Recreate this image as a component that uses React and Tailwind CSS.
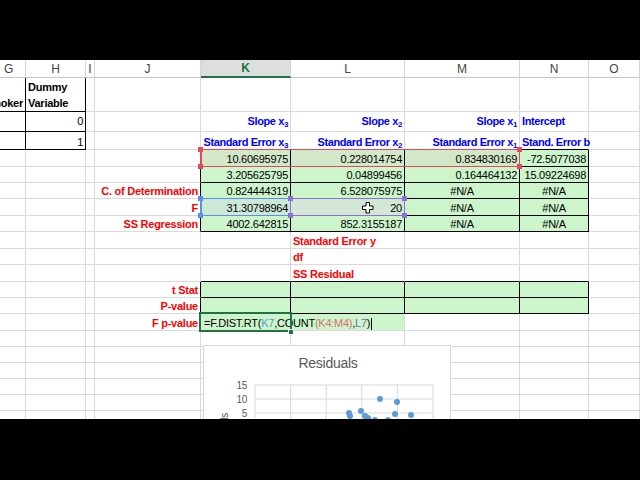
import React from "react";

const COLS = "grid grid-cols-[26px_60px_9px_106px_90px_114px_115px_69px_51px]";
const red = "font-bold text-[#ff0000]";
const blue = "font-bold text-[#0000ff] tracking-[-0.4px]";
const bold = "font-bold text-black";
const GREEN = "bg-[#ccf5cc]";

function Cell({ children, r, b, align = "right", cls = "" }) {
  const rc = r ? "border-r-black" : "border-r-[#dadada]";
  const bc = b ? "border-b-black" : "border-b-[#dadada]";
  const al =
    align === "right" ? "justify-end" : align === "center" ? "justify-center" : "justify-start";
  return (
    <div className={`flex items-end min-w-0 whitespace-nowrap border-r border-b px-[2px] ${rc} ${bc} ${al} ${cls}`}>
      {children}
    </div>
  );
}

function Row({ h, children }) {
  return <div className={`${COLS} leading-[13px] ${h}`}>{children}</div>;
}

function Blanks({ n }) {
  return Array.from({ length: n }).map((_, i) => <Cell key={i} />);
}

function Sub({ children }) {
  return <sub className="text-[8px]">{children}</sub>;
}

function Header() {
  const h = "flex items-center justify-center h-[18px] border-r border-b border-r-[#d4d4d4] border-b-[#c6c6c6]";
  return (
    <div className={`${COLS} text-[12px] text-[#444444] tracking-normal`}>
      <div className="flex items-center justify-start pl-[4px] h-[18px] border-r border-b border-r-[#d4d4d4] border-b-[#c6c6c6]">G</div>
      <div className={h}>H</div>
      <div className={h}>I</div>
      <div className={h}>J</div>
      <div className="flex items-center justify-center h-[18px] border-r border-r-[#d4d4d4] bg-[#dedede] border-b-2 border-b-[#217346] text-[#217346] font-bold">K</div>
      <div className={h}>L</div>
      <div className={h}>M</div>
      <div className={h}>N</div>
      <div className={h}>O</div>
    </div>
  );
}

function Chart() {
  const xs = [51, 86.6, 122.2, 157.8, 193.4, 229];
  const pts = [
    [145, 67], [146, 70], [157, 65], [161, 70], [164, 72], [171, 74],
    [176, 53], [184, 74], [191, 68], [193, 56], [207, 69], [168, 80], [180, 82],
  ];
  return (
    <div className="absolute left-[203px] top-[285px] w-[248px] h-[140px] bg-white border border-[#d9d9d9]">
      <svg width="248" height="140" className="block" fontFamily="Liberation Sans, Arial, sans-serif">
        <text x="124" y="22" fontSize="14" fill="#595959" textAnchor="middle">Residuals</text>
        {[39, 53, 67, 81, 95, 109].map((y) => (
          <line key={y} x1="51" x2="229" y1={y} y2={y} stroke="#d9d9d9" strokeWidth="1" />
        ))}
        {xs.map((x) => (
          <line key={x} x1={x} x2={x} y1="39" y2="140" stroke="#d9d9d9" strokeWidth="1" />
        ))}
        <text x="43" y="43" fontSize="10" fill="#595959" textAnchor="end">15</text>
        <text x="43" y="57" fontSize="10" fill="#595959" textAnchor="end">10</text>
        <text x="43" y="71" fontSize="10" fill="#595959" textAnchor="end">5</text>
        <text x="43" y="85" fontSize="10" fill="#595959" textAnchor="end">0</text>
        <text x="24" y="67" fontSize="10" fill="#595959" textAnchor="end" transform="rotate(-90 24 67)">Residuals</text>
        {pts.map(([x, y], i) => (
          <circle key={i} cx={x} cy={y} r="3" fill="#5b9bd5" />
        ))}
      </svg>
    </div>
  );
}

export default function App() {
  return (
    <div className="w-[640px] h-[480px] bg-black overflow-hidden font-['Liberation_Sans',Arial,sans-serif] text-[11px] tracking-[-0.25px] text-black">
      <div className="h-[60px]" />
      <div className="relative h-[359px] bg-white overflow-hidden">
        <Header />

        {/* Row: Dummy Variable */}
        <div className={`${COLS} h-[34px] leading-[16px]`}>
          <Cell r b cls={bold}>Smoker</Cell>
          <Cell r b align="left" cls={`${bold} whitespace-normal`}>
            <span>Dummy<br />Variable</span>
          </Cell>
          <Blanks n={7} />
        </div>

        {/* Row: Slope */}
        <div className={`${COLS} h-[20px] leading-[13px]`}>
          <Cell r b cls="pb-[3px]" />
          <Cell r b cls="pb-[3px]">0</Cell>
          <Cell cls="pb-[3px]" />
          <Cell cls="pb-[3px]" />
          <Cell cls={`${blue} pb-[3px]`}><span>Slope x<Sub>3</Sub></span></Cell>
          <Cell cls={`${blue} pb-[3px]`}><span>Slope x<Sub>2</Sub></span></Cell>
          <Cell cls={`${blue} pb-[3px]`}><span>Slope x<Sub>1</Sub></span></Cell>
          <Cell align="left" cls={`${blue} pb-[3px]`}>Intercept</Cell>
          <Cell cls="pb-[3px]" />
        </div>

        {/* Row: Standard Error */}
        <Row h="h-[18px]">
          <Cell r b />
          <Cell r b>1</Cell>
          <Cell />
          <Cell />
          <Cell b cls={blue}><span>Standard Error x<Sub>3</Sub></span></Cell>
          <Cell b cls={blue}><span>Standard Error x<Sub>2</Sub></span></Cell>
          <Cell b cls={blue}><span>Standard Error x<Sub>1</Sub></span></Cell>
          <Cell b align="left" cls={blue}>Stand. Error b</Cell>
          <Cell />
        </Row>

        <Row h="h-[17px]">
          <Blanks n={3} />
          <Cell r />
          <Cell r b cls="bg-[#d2e8c8]">10.60695975</Cell>
          <Cell r b cls="bg-[#d2e8c8]">0.228014754</Cell>
          <Cell r b cls="bg-[#d2e8c8]">0.834830169</Cell>
          <Cell r b cls={GREEN}>-72.5077038</Cell>
          <Cell />
        </Row>

        <Row h="h-[16px]">
          <Blanks n={3} />
          <Cell r />
          <Cell r b cls={GREEN}>3.205625795</Cell>
          <Cell r b cls={GREEN}>0.04899456</Cell>
          <Cell r b cls={GREEN}>0.164464132</Cell>
          <Cell r b cls={GREEN}>15.09224698</Cell>
          <Cell />
        </Row>

        <Row h="h-[16px]">
          <Blanks n={3} />
          <Cell r cls={red}>C. of Determination</Cell>
          <Cell r b cls={GREEN}>0.824444319</Cell>
          <Cell r b cls={GREEN}>6.528075975</Cell>
          <Cell r b align="center" cls={GREEN}>#N/A</Cell>
          <Cell r b align="center" cls={GREEN}>#N/A</Cell>
          <Cell />
        </Row>

        <Row h="h-[17px]">
          <Blanks n={3} />
          <Cell r cls={red}>F</Cell>
          <Cell r b cls="bg-[#cce8d6]">31.30798964</Cell>
          <Cell r b cls="bg-[#d4e6d4]">20</Cell>
          <Cell r b align="center" cls={GREEN}>#N/A</Cell>
          <Cell r b align="center" cls={GREEN}>#N/A</Cell>
          <Cell />
        </Row>

        <Row h="h-[16px]">
          <Blanks n={3} />
          <Cell r cls={red}>SS Regression</Cell>
          <Cell r b cls={GREEN}>4002.642815</Cell>
          <Cell r b cls={GREEN}>852.3155187</Cell>
          <Cell r b align="center" cls={GREEN}>#N/A</Cell>
          <Cell r b align="center" cls={GREEN}>#N/A</Cell>
          <Cell />
        </Row>

        <Row h="h-[17px]">
          <Blanks n={5} />
          <Cell align="left" cls={red}>Standard Error y</Cell>
          <Blanks n={3} />
        </Row>

        <Row h="h-[16px]">
          <Blanks n={5} />
          <Cell align="left" cls={red}>df</Cell>
          <Blanks n={3} />
        </Row>

        <Row h="h-[17px]">
          <Blanks n={4} />
          <Cell b />
          <Cell b align="left" cls={red}>SS Residual</Cell>
          <Cell b />
          <Cell b />
          <Cell />
        </Row>

        <Row h="h-[16px]">
          <Blanks n={3} />
          <Cell r cls={red}>t Stat</Cell>
          <Cell r b cls={GREEN} />
          <Cell r b cls={GREEN} />
          <Cell r b cls={GREEN} />
          <Cell r b cls={GREEN} />
          <Cell />
        </Row>

        <Row h="h-[16px]">
          <Blanks n={3} />
          <Cell r cls={red}>P-value</Cell>
          <Cell r b cls={GREEN} />
          <Cell r b cls={GREEN} />
          <Cell r b cls={GREEN} />
          <Cell r b cls={GREEN} />
          <Cell />
        </Row>

        <Row h="h-[17px]">
          <Blanks n={3} />
          <Cell r cls={red}>F p-value</Cell>
          <Cell align="left" cls={`${GREEN} col-span-2 pl-[3px]`}>
            <span>
              =F.DIST.RT(<span className="text-[#5b9bd5]">K7</span>,COUNT
              <span className="text-[#e06c6c]">(K4:M4)</span>,
              <span className="text-[#8064c8]">L7</span>)
              <span className="inline-block w-px h-[12px] bg-black align-bottom ml-px" />
            </span>
          </Cell>
          <Blanks n={3} />
        </Row>

        {["a", "b", "c", "d", "e", "f"].map((k) => (
          <Row key={k} h="h-[16px]">
            <Blanks n={9} />
          </Row>
        ))}

        {/* reference highlights (overlays) */}
        <div className="absolute left-[200px] top-[89px] w-[320px] h-[18px] border border-[#e04a5a] border-l-2 pointer-events-none" />
        <div className="absolute left-[198px] top-[87px] w-[5px] h-[5px] bg-[#e04a5a]" />
        <div className="absolute left-[517px] top-[87px] w-[5px] h-[5px] bg-[#e04a5a]" />
        <div className="absolute left-[198px] top-[104px] w-[5px] h-[5px] bg-[#e04a5a]" />
        <div className="absolute left-[517px] top-[104px] w-[5px] h-[5px] bg-[#e04a5a]" />

        <div className="absolute left-[200px] top-[138px] w-[91px] h-[18px] border border-[#5b8fe0] border-l-2 pointer-events-none" />
        <div className="absolute left-[290px] top-[138px] w-[115px] h-[18px] border border-[#8f6fd8] pointer-events-none" />
        <div className="absolute left-[198px] top-[136px] w-[5px] h-[5px] bg-[#5b8fe0]" />
        <div className="absolute left-[198px] top-[153px] w-[5px] h-[5px] bg-[#5b8fe0]" />
        <div className="absolute left-[288px] top-[136px] w-[5px] h-[5px] bg-[#8f6fd8]" />
        <div className="absolute left-[288px] top-[153px] w-[5px] h-[5px] bg-[#8f6fd8]" />
        <div className="absolute left-[402px] top-[136px] w-[5px] h-[5px] bg-[#8f6fd8]" />
        <div className="absolute left-[402px] top-[153px] w-[5px] h-[5px] bg-[#8f6fd8]" />

        {/* mouse cursor */}
        <svg className="absolute left-[362px] top-[142px]" width="12" height="12" viewBox="0 0 12 12">
          <polygon
            points="4,0.5 7.5,0.5 7.5,4 11,4 11,7.5 7.5,7.5 7.5,11 4,11 4,7.5 0.5,7.5 0.5,4 4,4"
            fill="#ffffff"
            stroke="#000000"
            strokeWidth="1"
          />
        </svg>

        {/* active cell */}
        <div className="absolute left-[199px] top-[252px] w-[93px] h-[20px] border-2 border-[#217346] pointer-events-none" />
        <div className="absolute left-[288px] top-[269px] w-[6px] h-[6px] bg-[#217346] border border-white" />

        <Chart />
      </div>
    </div>
  );
}
